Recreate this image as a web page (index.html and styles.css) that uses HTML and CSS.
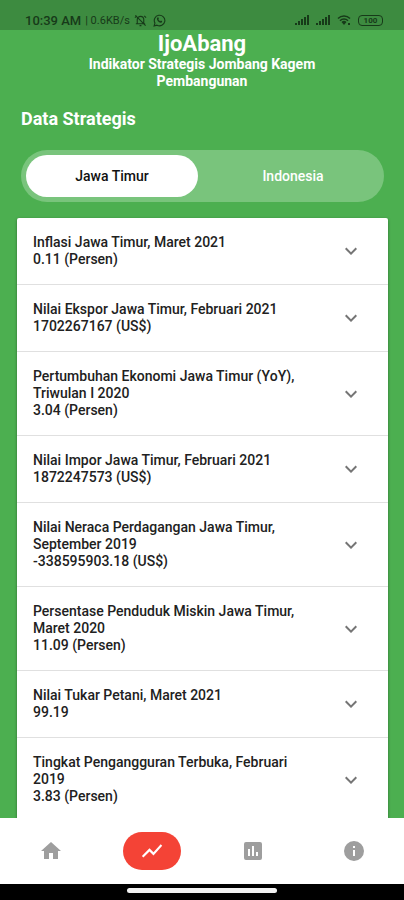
FILE: index.html
```html
<!DOCTYPE html>
<html lang="id">
<head>
<meta charset="UTF-8">
<meta name="viewport" content="width=device-width, initial-scale=1">
<title>IjoAbang</title>
<link rel="stylesheet" href="styles.css">
</head>
<body>

<svg class="sprite" aria-hidden="true">
    <symbol id="chevron" viewBox="0 0 24 24">
        <path d="M16.6 8.6L12 13.2 7.4 8.6 6 10l6 6 6-6z"/>
    </symbol>
    <symbol id="signal" viewBox="0 0 14 10">
        <path d="M0 8h2v2H0zM3 6h2v4H3zM6 4h2v6H6zM9 2h2v8H9zM12 0h2v10h-2z"/>
    </symbol>
</svg>

<div class="app">
    <div class="status-bar">
        <div class="status-left">
            <span class="clock">10:39 AM</span>
            <span class="speed">| 0.6KB/s</span>
            <svg class="status-icon" viewBox="0 0 14 14">
                <path d="M3.5 10V6a3.5 3.5 0 0 1 7 0v4M2 10.5h10M6 12.5h2M1.5 1.5l11 11M3 2L1 4M11 2l2 2" fill="none" stroke="currentColor" stroke-width="1.2"/>
            </svg>
            <svg class="status-icon whatsapp" viewBox="0 0 14 14">
                <path d="M1.2 12.8l.9-3A5.7 5.7 0 1 1 4.3 12z" fill="none" stroke="currentColor" stroke-width="1.2"/>
                <path d="M4.7 4c.5-.6 1-.5 1.2 0l.4 1-.5.8c.4.9 1.1 1.5 2 1.9l.8-.7 1.3.7c.1 1-.8 1.7-1.7 1.6C6 9 4.2 7 4.2 5z" fill="currentColor"/>
            </svg>
        </div>
        <div class="status-right">
            <svg class="signal"><use href="#signal"/></svg>
            <svg class="signal"><use href="#signal"/></svg>
            <svg class="wifi" viewBox="0 0 14 12">
                <path d="M1 4.5a8.5 8.5 0 0 1 12 0M3 6.7a5.6 5.6 0 0 1 8 0" fill="none" stroke="currentColor" stroke-width="1.5"/>
                <path d="M4.5 8a3.5 3.5 0 0 1 5 0L7 11zM11 9h2v2h-2z" fill="currentColor"/>
            </svg>
            <span class="battery">100</span>
        </div>
    </div>

    <main class="content">
        <header class="header">
            <h1>IjoAbang</h1>
            <p>Indikator Strategis Jombang Kagem Pembangunan</p>
        </header>

        <h2 class="section-title">Data Strategis</h2>

        <div class="tabs">
            <button class="tab active">Jawa Timur</button>
            <button class="tab">Indonesia</button>
        </div>

        <div class="card">
            <button class="item">
                <span class="item-text">Inflasi Jawa Timur, Maret 2021<br>0.11 (Persen)</span>
                <svg class="chevron"><use href="#chevron"/></svg>
            </button>
            <button class="item">
                <span class="item-text">Nilai Ekspor Jawa Timur, Februari 2021<br>1702267167 (US$)</span>
                <svg class="chevron"><use href="#chevron"/></svg>
            </button>
            <button class="item">
                <span class="item-text">Pertumbuhan Ekonomi Jawa Timur (YoY), Triwulan I 2020<br>3.04 (Persen)</span>
                <svg class="chevron"><use href="#chevron"/></svg>
            </button>
            <button class="item">
                <span class="item-text">Nilai Impor Jawa Timur, Februari 2021<br>1872247573 (US$)</span>
                <svg class="chevron"><use href="#chevron"/></svg>
            </button>
            <button class="item">
                <span class="item-text">Nilai Neraca Perdagangan Jawa Timur, September 2019<br>-338595903.18 (US$)</span>
                <svg class="chevron"><use href="#chevron"/></svg>
            </button>
            <button class="item">
                <span class="item-text">Persentase Penduduk Miskin Jawa Timur, Maret 2020<br>11.09 (Persen)</span>
                <svg class="chevron"><use href="#chevron"/></svg>
            </button>
            <button class="item">
                <span class="item-text">Nilai Tukar Petani, Maret 2021<br>99.19</span>
                <svg class="chevron"><use href="#chevron"/></svg>
            </button>
            <button class="item">
                <span class="item-text">Tingkat Pengangguran Terbuka, Februari 2019<br>3.83 (Persen)</span>
                <svg class="chevron"><use href="#chevron"/></svg>
            </button>
        </div>
    </main>

    <nav class="bottom-nav">
        <a class="nav-link" href="#beranda" aria-label="Beranda">
            <svg viewBox="0 0 24 24"><path d="M10 20v-6h4v6h5v-8h3L12 3 2 12h3v8z"/></svg>
        </a>
        <a class="nav-link active" href="#data" aria-label="Data Strategis">
            <svg viewBox="0 0 24 24"><path d="M3.4 18.6l6.1-6.1 4 4L22.2 6.800l-1.500-1.500-7.200 8-4-4L1.900 17.100z"/></svg>
        </a>
        <a class="nav-link" href="#statistik" aria-label="Statistik">
            <svg viewBox="0 0 24 24"><path d="M19 3H5a2 2 0 0 0-2 2v14a2 2 0 0 0 2 2h14a2 2 0 0 0 2-2V5a2 2 0 0 0-2-2zM9 17H7v-7h2zm4 0h-2V7h2zm4 0h-2v-4h2z"/></svg>
        </a>
        <a class="nav-link" href="#info" aria-label="Info">
            <svg viewBox="0 0 24 24"><path d="M12 2a10 10 0 1 0 0 20 10 10 0 0 0 0-20zm1 15h-2v-6h2zm0-8h-2V7h2z"/></svg>
        </a>
    </nav>

    <div class="gesture-bar"><span></span></div>
</div>

</body>
</html>
```
FILE: styles.css
```css
* {
    box-sizing: border-box;
}
body {
    margin: 0;
    font-family: Roboto, sans-serif;
    background: #4caf50;
}
button {
    font-family: inherit;
    border: none;
    cursor: pointer;
}
.sprite {
    display: none;
}
.app {
    height: 100vh;
    display: flex;
    flex-direction: column;
}

/* status bar */
.status-bar {
    display: flex;
    justify-content: space-between;
    align-items: center;
    height: 30px;
    padding: 10px 21px 0 25px;
    background: #3d8b40;
    color: #173a19;
    flex-shrink: 0;
}
.status-left, .status-right {
    display: flex;
    align-items: center;
}
.status-left {
    gap: 4px;
}
.status-right {
    gap: 7px;
}
.clock {
    font-size: 13px;
    font-weight: 500;
}
.speed {
    font-size: 11px;
}
.status-icon {
    width: 13px;
    height: 13px;
}
.whatsapp {
    margin-left: 2px;
}
.signal {
    width: 14px;
    height: 10px;
    fill: currentColor;
}
.wifi {
    width: 14px;
    height: 12px;
}
.battery {
    width: 25px;
    height: 11px;
    border: 1px solid currentColor;
    border-radius: 4px;
    font-size: 8px;
    line-height: 9px;
    font-weight: 700;
    text-align: center;
}

/* content */
.content {
    flex: 1;
    min-height: 0;
    overflow: hidden;
}
.header {
    padding: 2px 80px 0;
    text-align: center;
    color: #fff;
}
.header h1 {
    margin: 0;
    font-size: 22px;
    line-height: 24px;
    font-weight: 700;
}
.header p {
    margin: 0;
    font-size: 14px;
    line-height: 17px;
    font-weight: 700;
}
.section-title {
    margin: 18px 21px 20px;
    font-size: 18px;
    line-height: 22px;
    font-weight: 700;
    color: #fff;
}
.tabs {
    display: flex;
    gap: 9px;
    margin: 0 20px 16px 21px;
    padding: 5px;
    border-radius: 26px;
    background: #79c47c;
}
.tab {
    flex: 1;
    height: 42px;
    border-radius: 21px;
    background: none;
    color: #fff;
    font-size: 14px;
    font-weight: 500;
}
.tab.active {
    background: #fff;
    color: #111;
}
.card {
    margin: 0 16px 0 17px;
    background: #fff;
    border-radius: 2px 2px 0 0;
    box-shadow: 0 1px 3px rgba(0,0,0,0.4);
}
.item {
    display: flex;
    align-items: center;
    justify-content: space-between;
    gap: 32px;
    width: 100%;
    padding: 16px 25px 16px 16px;
    background: none;
    border-bottom: 1px solid #e0e0e0;
    text-align: left;
    font-size: 14px;
    line-height: 17px;
    font-weight: 500;
    color: #212121;
}
.item:last-child {
    border-bottom: none;
}
.chevron {
    width: 24px;
    height: 24px;
    flex-shrink: 0;
    fill: #757575;
}

/* bottom navigation */
.bottom-nav {
    display: flex;
    justify-content: space-around;
    align-items: center;
    height: 66px;
    background: #fff;
    flex-shrink: 0;
}
.nav-link {
    display: flex;
    align-items: center;
    justify-content: center;
    width: 58px;
    height: 38px;
    border-radius: 19px;
}
.nav-link svg {
    width: 24px;
    height: 24px;
    fill: #9e9e9e;
}
.nav-link.active {
    background: #f44336;
}
.nav-link.active svg {
    fill: #fff;
}
.gesture-bar {
    display: flex;
    justify-content: center;
    align-items: flex-start;
    height: 16px;
    padding-top: 4px;
    background: #000;
    flex-shrink: 0;
}
.gesture-bar span {
    width: 37%;
    height: 5px;
    border-radius: 3px;
    background: #f2f2f2;
}
```
